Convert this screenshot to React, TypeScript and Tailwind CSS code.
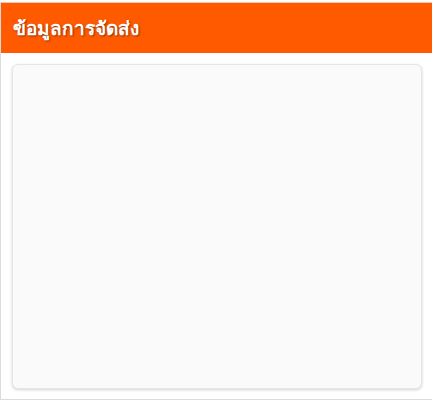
export default function App() {
  return (
    <div className="h-[402px] w-[432px] overflow-hidden bg-white pt-[2px]" style={{ fontFamily: 'Tahoma, "Noto Sans", "DejaVu Sans", sans-serif' }}>
      <div className="flex h-[398px] flex-col border-b border-l border-t border-[#dcdcdc] border-t-[#f3c9b3]">
        <div className="flex h-[50px] items-center bg-[#ff5a00] px-3">
          <h2 className="text-[19px] font-bold text-white [text-shadow:1px_1px_2px_rgba(0,0,0,0.45)]">
            ข้อมูลการจัดส่ง
          </h2>
        </div>
        <div className="flex-1 pb-[10px] pl-[11px] pr-[10px] pt-[11px]">
          <div className="h-full rounded-md border border-[#e6e6e6] bg-[#fafafa] shadow-[0_1px_3px_rgba(0,0,0,0.18)]" />
        </div>
      </div>
    </div>
  );
}
